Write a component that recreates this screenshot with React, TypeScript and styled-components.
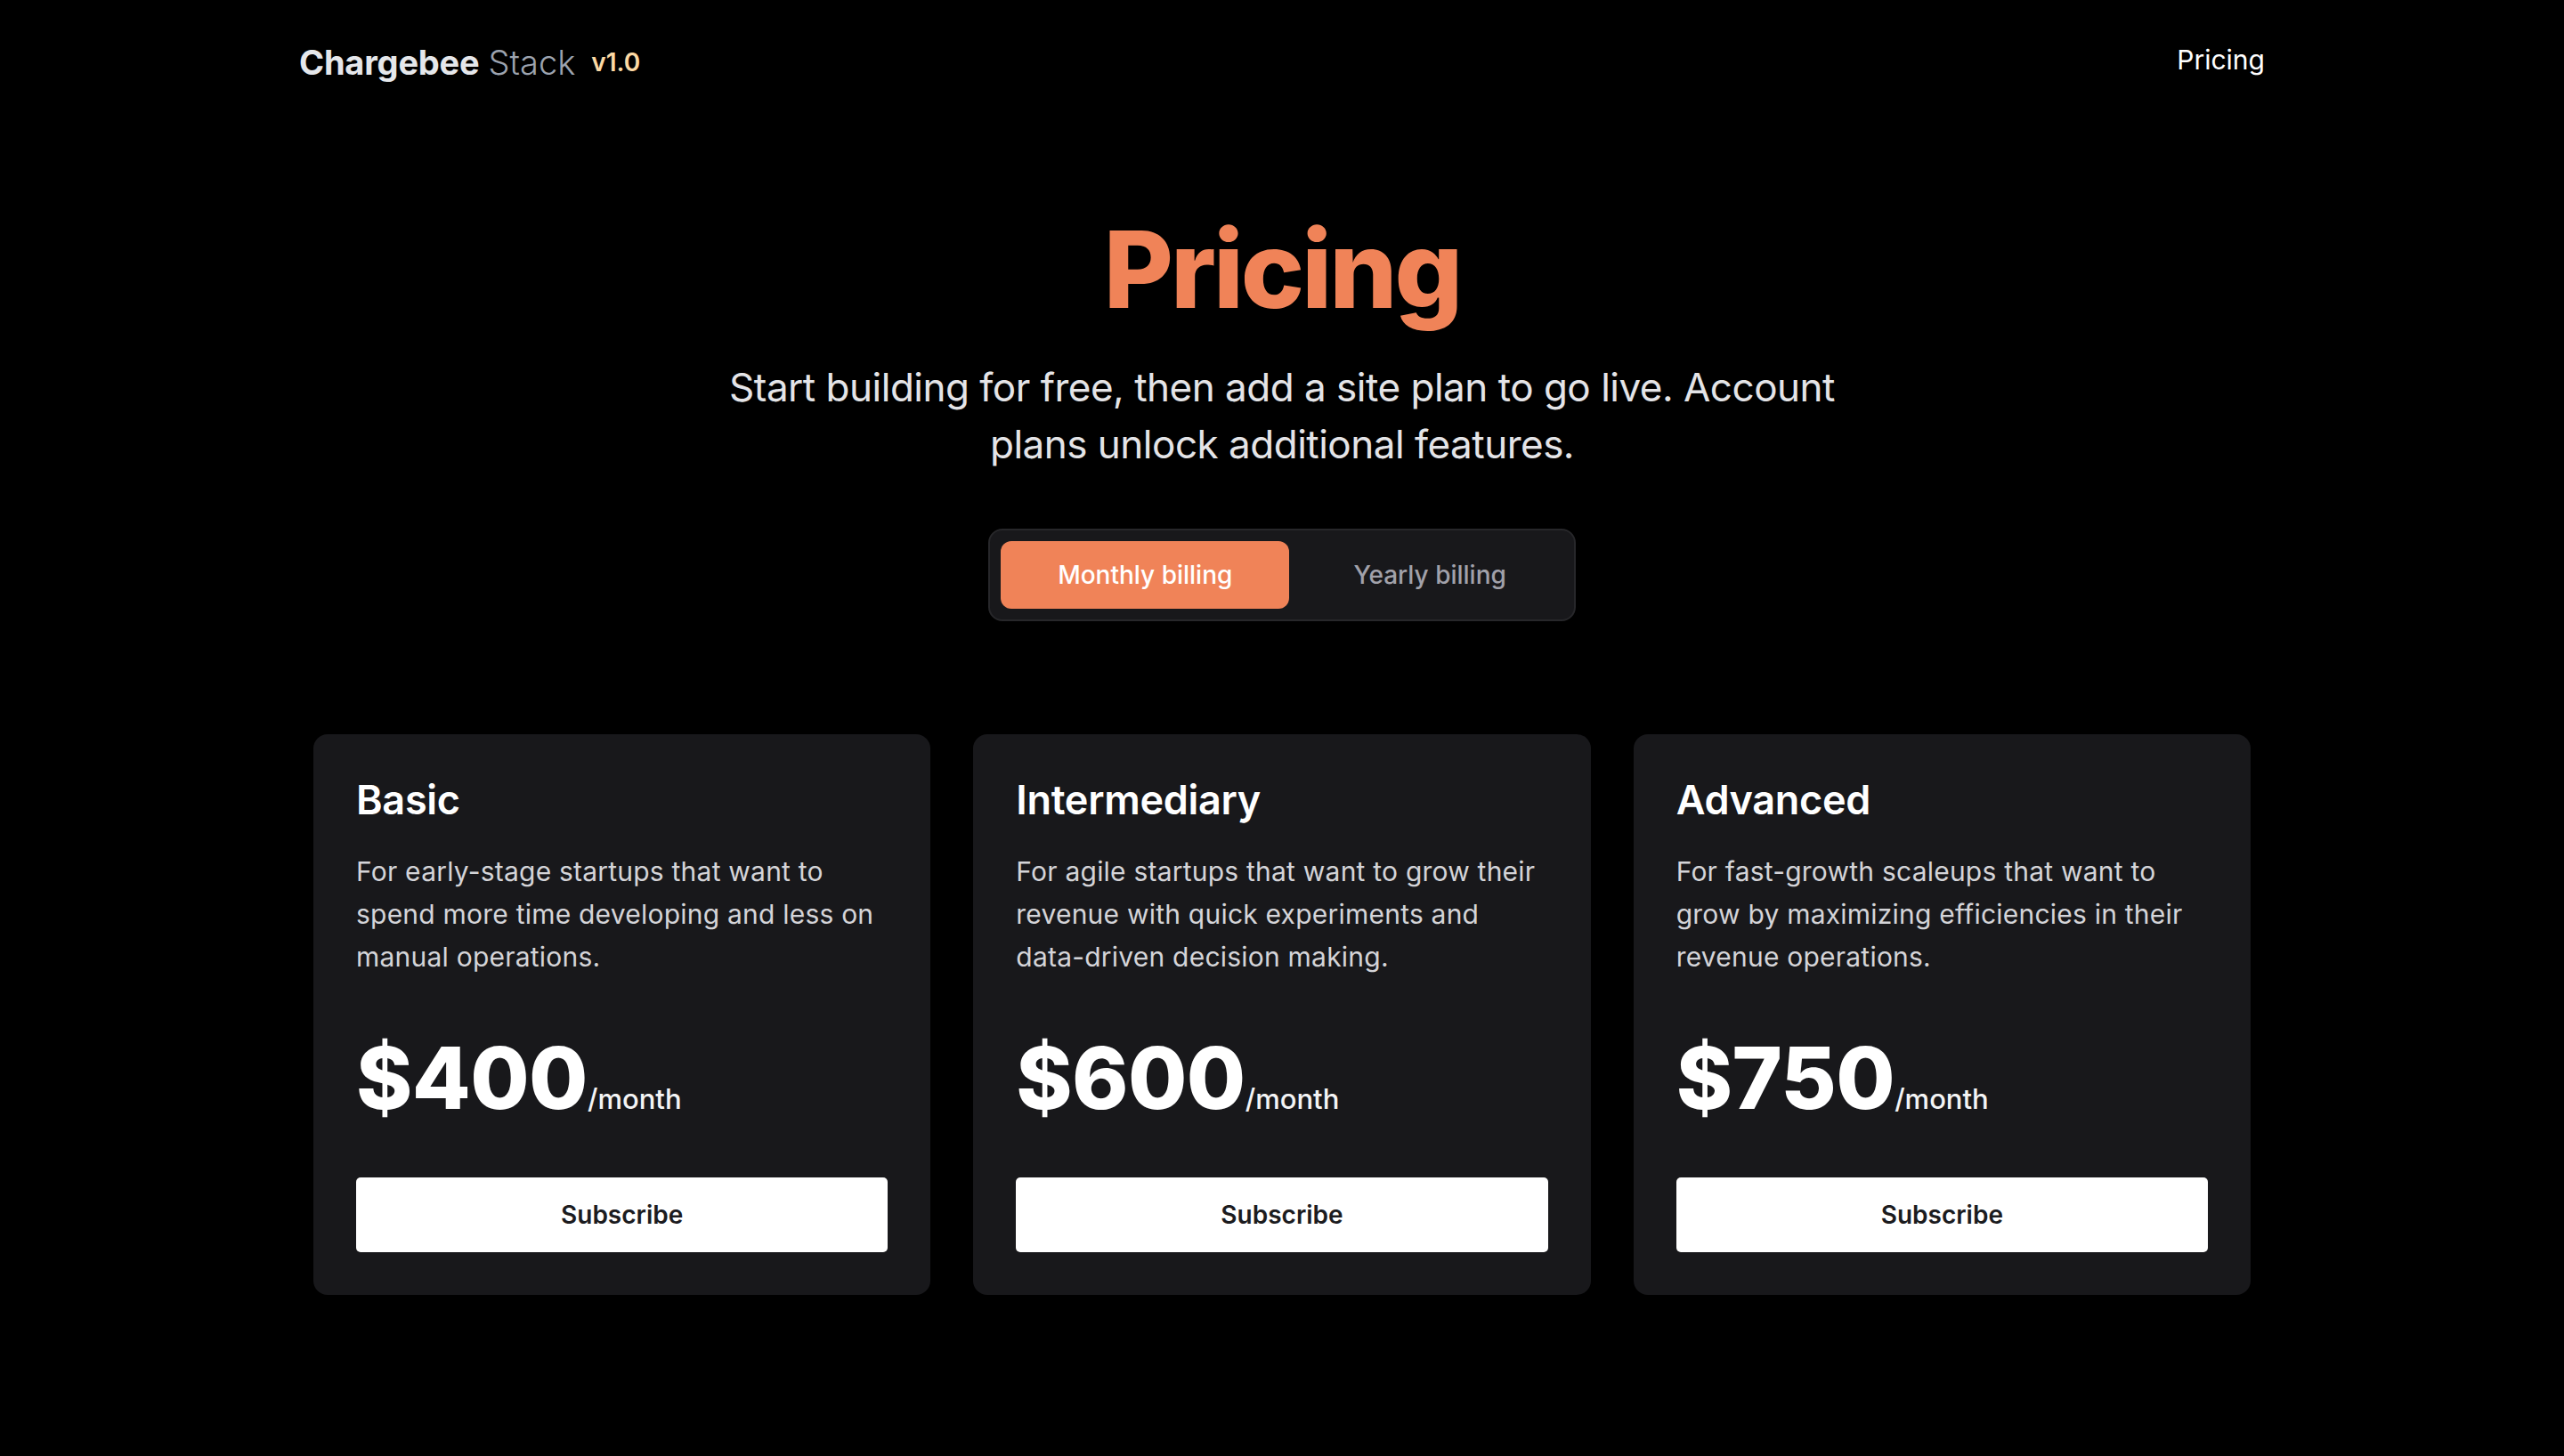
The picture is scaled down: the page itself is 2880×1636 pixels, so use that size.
import React, { useState } from "react";
import styled, { createGlobalStyle } from "styled-components";

const GlobalStyle = createGlobalStyle`
  html, body {
    margin: 0;
    padding: 0;
    background: #000000;
    font-family: Inter, "Noto Sans", "Liberation Sans", sans-serif;
    -webkit-font-smoothing: antialiased;
  }
  * { box-sizing: border-box; }
`;

const Page = styled.div`
  min-height: 1636px;
  background: #000000;
  color: #ffffff;
`;

const Header = styled.header`
  height: 140px;
  padding: 0 336px;
  display: flex;
  align-items: center;
  justify-content: space-between;
`;

const Brand = styled.a`
  display: flex;
  align-items: center;
  text-decoration: none;
  font-size: 38px;
  line-height: 48px;
`;

const BrandName = styled.span`
  font-weight: 700;
  color: #e5e7eb;
  letter-spacing: -0.2px;
`;

const BrandSub = styled.span`
  font-weight: 300;
  color: #9ca3af;
  margin-left: 10px;
`;

const Version = styled.span`
  font-size: 28px;
  font-weight: 600;
  color: #fcd9a4;
  margin-left: 18px;
`;

const NavLink = styled.a`
  font-size: 30px;
  font-weight: 400;
  color: #ffffff;
  text-decoration: none;
  margin-bottom: 6px;
`;

const Main = styled.main`
  max-width: 2304px;
  margin: 0 auto;
  padding: 103px 64px 120px;
`;

const Hero = styled.section`
  display: flex;
  flex-direction: column;
  align-items: center;
`;

const Title = styled.h1`
  margin: 0;
  font-size: 120px;
  line-height: 120px;
  font-weight: 800;
  color: #f08358;
  letter-spacing: -3px;
`;

const Subtitle = styled.p`
  margin: 40px 0 0;
  max-width: 1344px;
  font-size: 44px;
  line-height: 64px;
  color: #e4e4e7;
  text-align: center;
  letter-spacing: -0.5px;
`;

const Toggle = styled.div`
  margin-top: 63px;
  display: flex;
  padding: 4px;
  background: #18181b;
  border: 2px solid #27272a;
  border-radius: 16px;
`;

const ToggleButton = styled.button<{ $active: boolean }>`
  margin: 8px;
  height: 76px;
  padding: 0 64px;
  border: none;
  border-radius: 12px;
  font-family: inherit;
  font-size: 28px;
  font-weight: 500;
  white-space: nowrap;
  cursor: pointer;
  background: ${(p) => (p.$active ? "#f08358" : "transparent")};
  color: ${(p) => (p.$active ? "#ffffff" : "#a1a1aa")};
  & + & {
    margin-left: 0;
  }
`;

const Grid = styled.div`
  margin-top: 127px;
  display: grid;
  grid-template-columns: repeat(3, 1fr);
  gap: 48px;
`;

const Card = styled.div`
  background: #18181b;
  border-radius: 16px;
  padding: 48px;
  display: flex;
  flex-direction: column;
`;

const PlanName = styled.h2`
  margin: 0;
  font-size: 45px;
  line-height: 52px;
  font-weight: 600;
  color: #ffffff;
  letter-spacing: -0.3px;
`;

const PlanDesc = styled.p`
  margin: 30px 0 0;
  font-size: 30px;
  line-height: 48px;
  color: #d4d4d8;
  letter-spacing: 0.22px;
  min-height: 144px;
`;

const PriceRow = styled.p`
  margin: 64px 0 0;
  display: flex;
  align-items: baseline;
  white-space: nowrap;
`;

const Amount = styled.span`
  font-size: 96px;
  line-height: 96px;
  font-weight: 800;
  color: #ffffff;
  letter-spacing: -0.6px;
`;

const Interval = styled.span`
  font-size: 31px;
  line-height: 1;
  font-weight: 500;
  color: #f4f4f5;
`;

const SubscribeButton = styled.button`
  margin-top: 64px;
  height: 84px;
  width: 100%;
  display: flex;
  align-items: center;
  justify-content: center;
  background: #ffffff;
  color: #1c1c1f;
  border: none;
  border-radius: 5px;
  font-family: inherit;
  font-size: 28px;
  font-weight: 600;
  cursor: pointer;
`;

const plans = [
  {
    name: "Basic",
    description:
      "For early-stage startups that want to spend more time developing and less on manual operations.",
    monthly: 400,
    yearly: 4000,
  },
  {
    name: "Intermediary",
    description:
      "For agile startups that want to grow their revenue with quick experiments and data-driven decision making.",
    monthly: 600,
    yearly: 6000,
  },
  {
    name: "Advanced",
    description:
      "For fast-growth scaleups that want to grow by maximizing efficiencies in their revenue operations.",
    monthly: 750,
    yearly: 7500,
  },
];

export default function App() {
  const [interval, setInterval] = useState<"month" | "year">("month");
  return (
    <Page>
      <GlobalStyle />
      <Header>
        <Brand href="#">
          <BrandName>Chargebee</BrandName>
          <BrandSub>Stack</BrandSub>
          <Version>v1.0</Version>
        </Brand>
        <NavLink href="#">Pricing</NavLink>
      </Header>
      <Main>
        <Hero>
          <Title>Pricing</Title>
          <Subtitle>
            Start building for free, then add a site plan to go live. Account
            plans unlock additional features.
          </Subtitle>
          <Toggle>
            <ToggleButton
              $active={interval === "month"}
              onClick={() => setInterval("month")}
            >
              Monthly billing
            </ToggleButton>
            <ToggleButton
              $active={interval === "year"}
              onClick={() => setInterval("year")}
            >
              Yearly billing
            </ToggleButton>
          </Toggle>
        </Hero>
        <Grid>
          {plans.map((plan) => (
            <Card key={plan.name}>
              <PlanName>{plan.name}</PlanName>
              <PlanDesc>{plan.description}</PlanDesc>
              <PriceRow>
                <Amount>
                  ${interval === "month" ? plan.monthly : plan.yearly}
                </Amount>
                <Interval>/{interval}</Interval>
              </PriceRow>
              <SubscribeButton>Subscribe</SubscribeButton>
            </Card>
          ))}
        </Grid>
      </Main>
    </Page>
  );
}
